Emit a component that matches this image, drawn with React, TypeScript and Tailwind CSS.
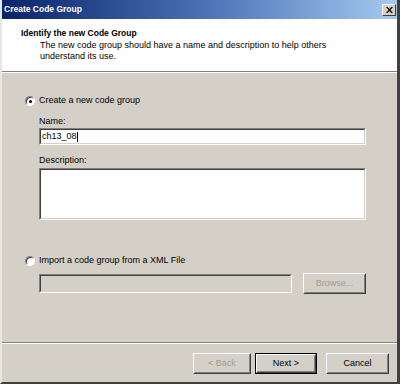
import React from "react";

const font = { fontFamily: "Tahoma, 'Liberation Sans', Arial, sans-serif" };

function Radio({ checked }: { checked?: boolean }) {
    return (
        <span className="relative inline-block shrink-0 w-[10px] h-[10px] rounded-full bg-white border border-t-[#808080] border-l-[#808080] border-b-[#ffffff] border-r-[#ffffff] shadow-[inset_1px_1px_0_#404040]">
            {checked && <span className="absolute left-[2.5px] top-[2.5px] w-[3px] h-[3px] rounded-full bg-black" />}
        </span>
    );
}

function Sunken({ className, children }: { className?: string; children?: React.ReactNode }) {
    return (
        <div className={"border border-t-[#808080] border-l-[#808080] border-b-[#ffffff] border-r-[#ffffff] " + (className ?? "")}>
            <div className="h-full border border-t-[#404040] border-l-[#404040] border-b-[#d4d0c8] border-r-[#d4d0c8]">
                {children}
            </div>
        </div>
    );
}

function Btn({ label, disabled, primary, w }: { label: string; disabled?: boolean; primary?: boolean; w: string }) {
    return (
        <div className={w + " h-[21px] " + (primary ? "border border-black" : "")}>
            <div className="h-full border border-t-white border-l-white border-b-[#404040] border-r-[#404040]">
                <div className={"h-full flex items-center justify-center border border-transparent border-b-[#808080] border-r-[#808080] text-[9px] " + (disabled ? "text-[#a09c94]" : "text-black")}>
                    {label}
                </div>
            </div>
        </div>
    );
}

export default function App() {
    return (
        <div className="w-[400px] h-[384px] bg-[#d4d0c8] flex flex-col border-l-2 border-l-[#e8e6e0] border-r-[3px] border-r-[#404040] border-b-2 border-b-[#404040] overflow-hidden" style={font}>
            {/* Title bar */}
            <div className="h-[19px] shrink-0 flex items-center justify-between pl-[2px] pr-[1px] bg-gradient-to-r from-[#0a246a] via-[#4a6fb4] to-[#a6caf0]">
                <span className="text-white font-bold text-[8.5px] leading-none">Create Code Group</span>
                <div className="w-[14px] h-[12px] bg-[#d4d0c8] border border-t-white border-l-white border-b-[#404040] border-r-[#404040] flex items-center justify-center">
                    <svg width="7" height="6" viewBox="0 0 7 6">
                        <path d="M0 0h1.6l1.9 2 1.9-2H7L4.4 3 7 6H5.4L3.5 4 1.6 6H0l2.6-3z" fill="black" />
                    </svg>
                </div>
            </div>

            {/* Header */}
            <div className="h-[52px] shrink-0 bg-white pl-[19px] pt-[9px]">
                <div className="font-bold text-black text-[8.5px] leading-[11px]">Identify the new Code Group</div>
                <div className="pl-[19px] pt-[1px] text-black text-[9px] leading-[10.5px]">
                    The new code group should have a name and description to help others
                    <br />
                    understand its use.
                </div>
            </div>
            <div className="h-px bg-[#808080] shrink-0" />
            <div className="h-px bg-white shrink-0" />

            {/* Body */}
            <div className="flex-1 flex flex-col pl-[23px] pt-[22px] text-[9px] text-black">
                <div className="h-[12px] flex items-center gap-[4px]">
                    <Radio checked />
                    <span>Create a new code group</span>
                </div>
                <div className="pl-[14px]">
                    <div className="leading-[11px] mt-[9px]">Name:</div>
                    <Sunken className="w-[327px] h-[17px] mt-[1px] bg-white">
                        <div className="pl-[1px] leading-[13px]">ch13_08<span className="inline-block w-px h-[10px] bg-black align-middle" /></div>
                    </Sunken>
                    <div className="leading-[11px] mt-[10px]">Description:</div>
                    <Sunken className="w-[327px] h-[52px] mt-[2px] bg-white" />
                </div>

                <div className="h-[12px] flex items-center gap-[4px] mt-[35px]">
                    <Radio />
                    <span>Import a code group from a XML File</span>
                </div>
                <div className="pl-[14px] mt-[6px] flex items-start gap-[11px]">
                    <Sunken className="w-[253px] h-[19px] mt-px bg-[#d4d0c8]" />
                    <Btn label="Browse..." disabled w="w-[63px]" />
                </div>
            </div>

            {/* Footer */}
            <div className="h-px bg-[#808080] shrink-0" />
            <div className="h-px bg-white shrink-0" />
            <div className="h-[38px] shrink-0 flex items-start justify-end pr-[8px] pt-[9px]">
                <Btn label="< Back" disabled w="w-[58px]" />
                <div className="ml-[4px]">
                    <Btn label="Next >" primary w="w-[62px]" />
                </div>
                <div className="ml-[9px]">
                    <Btn label="Cancel" w="w-[63px]" />
                </div>
            </div>
        </div>
    );
}
